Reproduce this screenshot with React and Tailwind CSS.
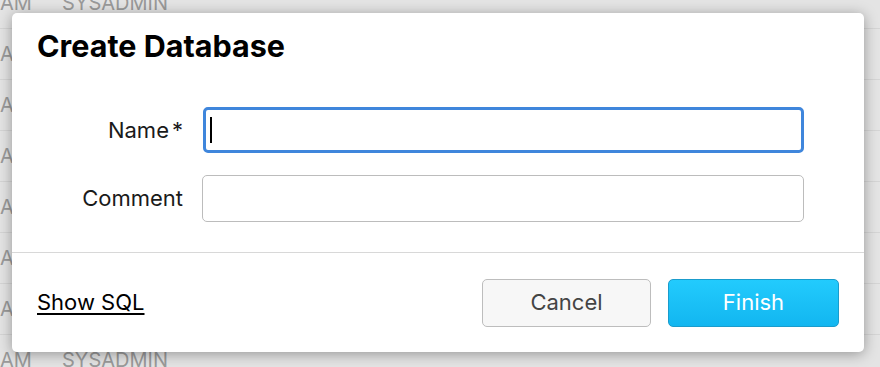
import React from 'react';

const rows = Array.from({ length: 8 });

function BackgroundTable() {
  return (
    <div className="mt-[-22px] flex flex-col">
      {rows.map((_, i) => (
        <div
          key={i}
          className="flex h-[51px] shrink-0 items-center border-b border-[#d5d5d5] text-[20px] text-[#9a9a9a]"
        >
          <span className="w-[62px] shrink-0">AM</span>
          <span>SYSADMIN</span>
        </div>
      ))}
    </div>
  );
}

export default function App() {
  return (
    <div
      className="relative h-[367px] w-[880px] overflow-hidden bg-[#e4e4e4]"
      style={{ fontFamily: 'Inter, "Noto Sans", sans-serif' }}
    >
      <BackgroundTable />

      {/* dialog */}
      <div className="absolute left-[12px] top-[13px] flex h-[339px] w-[852px] flex-col rounded-[5px] bg-white shadow-[0_2px_14px_rgba(0,0,0,0.35)]">
        <h2 className="pl-[25px] pt-[15px] text-[30.5px] font-bold leading-[36px] text-black">
          Create Database
        </h2>

        <div className="mt-[43px] flex flex-col gap-[22px] pr-[60px]">
          <div className="flex items-center">
            <label className="w-[171px] shrink-0 text-right text-[22px] text-[#1a1a1a]">
              Name<span className="ml-[3px]">*</span>
            </label>
            <div className="ml-[20px] flex h-[46px] flex-1 items-center rounded-[5px] border-[3px] border-[#3f86dc] pl-[4px]">
              <span className="h-[26px] w-[2px] bg-black" />
            </div>
          </div>
          <div className="flex items-center">
            <label className="w-[171px] shrink-0 text-right text-[22px] text-[#1a1a1a]">Comment</label>
            <div className="ml-[19px] h-[47px] flex-1 rounded-[5px] border-[1.5px] border-[#bcbcbc]" />
          </div>
        </div>

        <div className="mt-[30px] border-t border-[#d8d8d8]" />

        <div className="flex flex-1 items-center justify-between pl-[25px] pr-[25px]">
          <button className="text-[22px] text-black underline underline-offset-[3px]">Show SQL</button>
          <div className="flex gap-[17px]">
            <button className="h-[48px] w-[169px] rounded-[5px] border border-[#bdbdbd] bg-[#f7f7f7] text-[22px] text-[#444]">
              Cancel
            </button>
            <button className="h-[48px] w-[171px] rounded-[5px] border border-[#1a9ccc] bg-gradient-to-b from-[#22cbfd] to-[#12b6f0] text-[22px] text-white">
              Finish
            </button>
          </div>
        </div>
      </div>
    </div>
  );
}
